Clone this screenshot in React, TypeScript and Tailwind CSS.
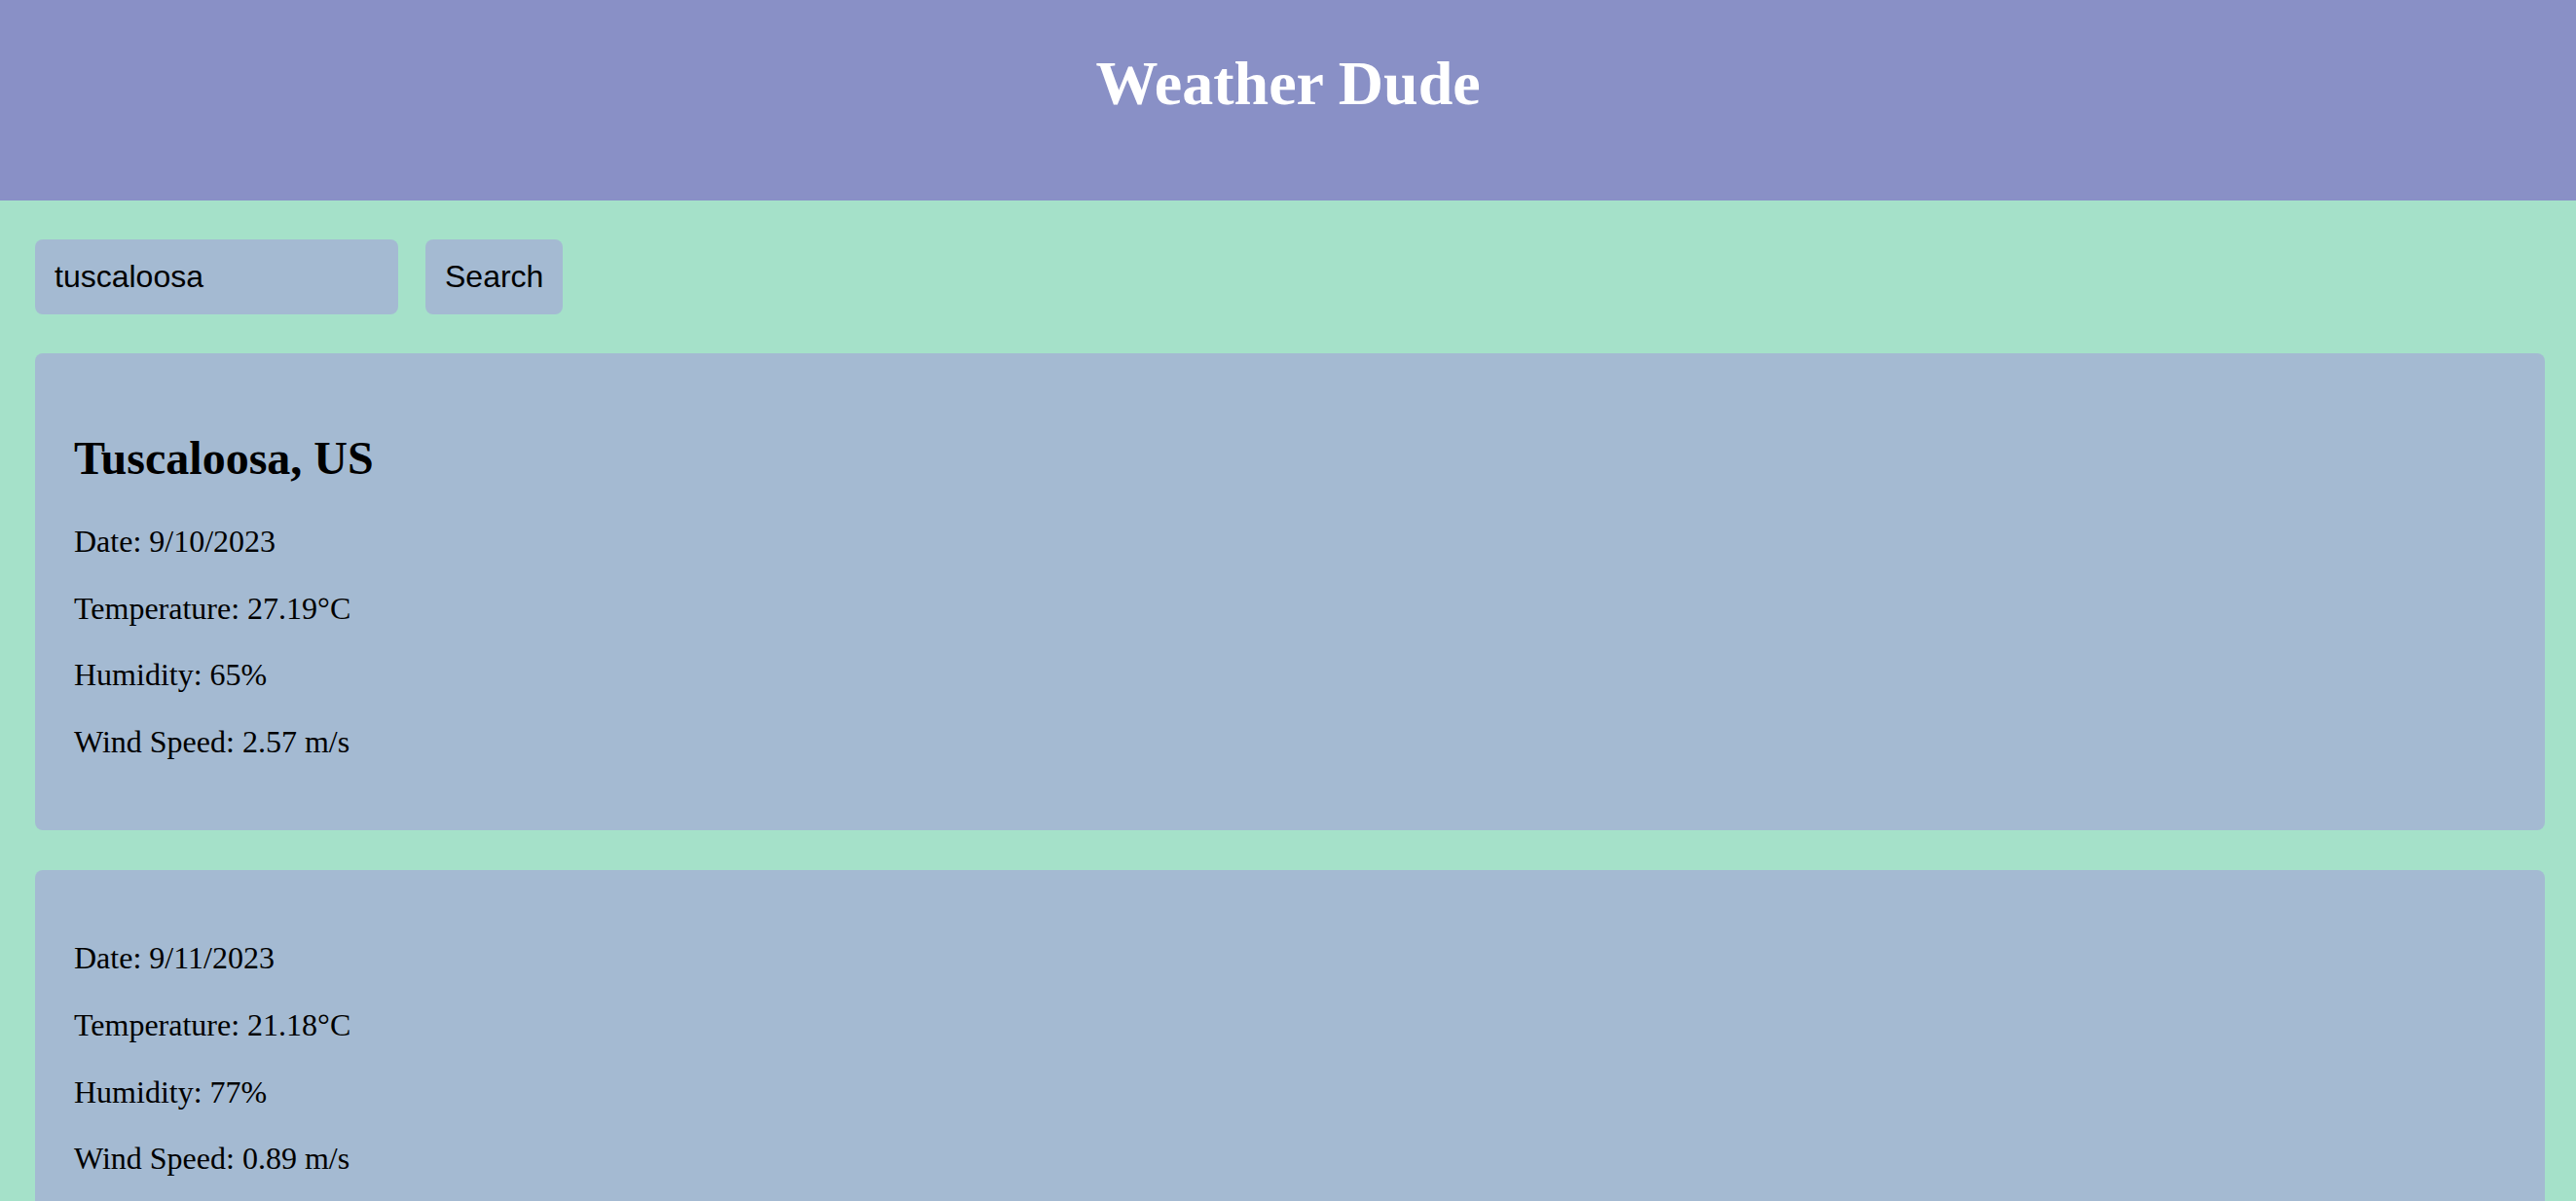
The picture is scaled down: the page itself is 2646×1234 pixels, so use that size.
const days = [
  { city: "Tuscaloosa, US", date: "9/10/2023", temp: "27.19", humidity: "65", wind: "2.57" },
  { city: "", date: "9/11/2023", temp: "21.18", humidity: "77", wind: "0.89" },
];

function DayCard({ city, date, temp, humidity, wind }: (typeof days)[number]) {
  return (
    <div className="rounded-[8px] bg-[#a4bad2] p-[40px] text-[32px] leading-[1.149] text-black">
      {city && <h2 className="my-[40px] text-[48px] font-bold leading-[1.149]">{city}</h2>}
      <p className="my-[32px]">Date: {date}</p>
      <p className="my-[32px]">Temperature: {temp}°C</p>
      <p className="my-[32px]">Humidity: {humidity}%</p>
      <p className="my-[32px]">Wind Speed: {wind} m/s</p>
    </div>
  );
}

export default function App() {
  return (
    <div className="min-h-screen bg-[#a5e1c9] font-['Liberation_Serif',serif]">
      <header className="h-[206px] bg-[#8990c6] pt-[49px] text-center">
        <h1 className="text-[64px] font-bold leading-[1.149] text-white">Weather Dude</h1>
      </header>
      <main className="flex flex-col gap-[40px] pb-[40px] pl-[36px] pr-[32px] pt-[40px]">
        <div className="flex gap-[28px] font-['Liberation_Sans',Arial,sans-serif] text-[32px] leading-[1.149]">
          <input
            defaultValue="tuscaloosa"
            className="w-[373px] rounded-[8px] bg-[#a4bad2] px-[20px] py-[20px] text-black outline-none"
          />
          <button className="rounded-[8px] bg-[#a4bad2] px-[20px] py-[20px] text-black">Search</button>
        </div>
        <div className="flex flex-col gap-[41px]">
          {days.map((d) => (
            <DayCard key={d.date} {...d} />
          ))}
        </div>
      </main>
    </div>
  );
}
